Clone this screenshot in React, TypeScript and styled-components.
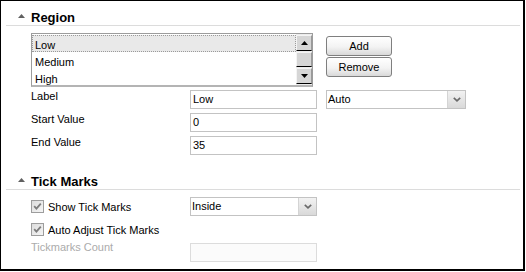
import React from 'react';
import styled, { createGlobalStyle } from 'styled-components';

const Global = createGlobalStyle`
  html, body { margin: 0; padding: 0; background: #fff; }
  body { font-family: "Liberation Sans", Arial, sans-serif; font-size: 11px; color: #000; }
`;

const Panel = styled.div`
  width: 525px;
  height: 271px;
  box-sizing: border-box;
  border-style: solid;
  border-color: #000;
  border-width: 1px 2px 2px 1px;
  padding: 0 3px 0 5px;
  background: #fff;
`;

const Section = styled.section<{ $gap?: number }>`
  margin-top: ${p => p.$gap ?? 0}px;
`;

const Header = styled.div`
  height: 24px;
  display: flex;
  align-items: flex-end;
  gap: 6px;
  padding-left: 12px;
  border-bottom: 1px solid #dcdcdc;
`;

const Caret = styled.svg`
  width: 7px;
  height: 4px;
  margin-bottom: 7px;
  flex: none;
`;

const Title = styled.div`
  font-size: 13px;
  font-weight: bold;
  line-height: 15px;
`;

const Body = styled.div`
  padding: 7px 0 0 25px;
`;

const ListRow = styled.div`
  display: flex;
  gap: 13px;
`;

const ListBox = styled.div`
  width: 282px;
  height: 54px;
  box-sizing: border-box;
  border: 1px solid #9c9c9c;
  border-bottom: 2px solid #b4b4b4;
  display: flex;
  overflow: hidden;
`;

const Items = styled.div`
  flex: 1;
  overflow: hidden;
  padding-top: 1px;
`;

const Item = styled.div<{ $selected?: boolean }>`
  height: 17px;
  line-height: 14px;
  box-sizing: border-box;
  padding: 2px 0 0 2px;
  background: ${p => (p.$selected ? '#e9e9e9' : 'transparent')};
  border: 1px dotted ${p => (p.$selected ? '#9a9a9a' : 'transparent')};
`;

const ScrollBar = styled.div`
  width: 16px;
  display: flex;
  flex-direction: column;
  padding: 1px 0;
  gap: 1px;
  background: #ececec;
`;

const ScrollPart = styled.div`
  flex: 1;
  display: flex;
  align-items: center;
  justify-content: center;
  background: #d6d6d6;
  border-top: 1px solid #f4f4f4;
  border-left: 1px solid #f4f4f4;
  border-right: 1px solid #9a9a9a;
  border-bottom: 1px solid #000;
`;

const ButtonCol = styled.div`
  display: flex;
  flex-direction: column;
  gap: 1px;
  padding-top: 3px;
`;

const Button = styled.button`
  width: 66px;
  height: 20px;
  box-sizing: border-box;
  border: 1px solid #7f7f7f;
  border-radius: 3px;
  background: linear-gradient(#ffffff, #f3f3f3 55%, #d9d9d9);
  font: 11px "Liberation Sans", Arial, sans-serif;
  color: #000;
  padding: 0;
`;

const FormGrid = styled.div<{ $top?: number }>`
  display: grid;
  grid-template-columns: 150px 127px 140px;
  grid-auto-rows: 19px;
  column-gap: 9px;
  row-gap: 4px;
  margin-top: ${p => p.$top ?? 0}px;
`;

const Label = styled.div<{ $muted?: boolean }>`
  line-height: ${p => (p.$muted ? 9 : 13)}px;
  color: ${p => (p.$muted ? '#ababab' : '#000')};
`;

const Input = styled.div<{ $disabled?: boolean }>`
  height: 19px;
  box-sizing: border-box;
  border: 1px solid ${p => (p.$disabled ? '#dcdcdc' : '#c3c3c3')};
  background: ${p => (p.$disabled ? '#fbfbfb' : '#fff')};
  padding: 0 2px;
  line-height: 17px;
`;

const Select = styled.div`
  height: 19px;
  box-sizing: border-box;
  border: 1px solid #c3c3c3;
  display: flex;
`;

const SelectText = styled.div`
  flex: 1;
  padding-left: 1px;
  line-height: 17px;
`;

const DropButton = styled.div`
  width: 17px;
  display: flex;
  align-items: center;
  justify-content: center;
  background: linear-gradient(#f2f2f2, #d9d9d9);
  border-left: 1px solid #d4d4d4;
`;

const CheckRow = styled.label`
  display: flex;
  align-items: center;
  gap: 4px;
`;

const Box = styled.svg`
  width: 13px;
  height: 13px;
  flex: none;
`;

const Up = () => (
  <Caret viewBox="0 0 7 4"><polygon points="0,4 3.5,0 7,4" fill="#606060" /></Caret>
);

const Arrow = ({ down }: { down?: boolean }) => (
  <svg width="7" height="4" viewBox="0 0 7 4">
    <polygon points={down ? '0,0 7,0 3.5,4' : '0,4 3.5,0 7,4'} fill="#000" />
  </svg>
);

const Chevron = () => (
  <svg width="8" height="5" viewBox="0 0 8 5">
    <polyline points="0.8,0.8 4,3.8 7.2,0.8" fill="none" stroke="#6a6a6a" strokeWidth="1.7" />
  </svg>
);

const Check = () => (
  <Box viewBox="0 0 13 13">
    <defs>
      <linearGradient id="cb" x1="0" y1="0" x2="1" y2="1">
        <stop offset="0" stopColor="#dcdcdc" />
        <stop offset="1" stopColor="#f6f6f6" />
      </linearGradient>
    </defs>
    <rect x="0.5" y="0.5" width="12" height="12" fill="url(#cb)" stroke="#9d9d9d" />
    <polyline points="3.2,6.2 5.4,8.6 9.8,3.6" fill="none" stroke="#7d7d7d" strokeWidth="1.8" />
  </Box>
);

export default function App() {
  return (
    <>
      <Global />
      <Panel>
        <Section>
          <Header><Up /><Title>Region</Title></Header>
          <Body>
            <ListRow>
              <ListBox>
                <Items>
                  <Item $selected>Low</Item>
                  <Item>Medium</Item>
                  <Item>High</Item>
                </Items>
                <ScrollBar>
                  <ScrollPart><Arrow /></ScrollPart>
                  <ScrollPart />
                  <ScrollPart><Arrow down /></ScrollPart>
                </ScrollBar>
              </ListBox>
              <ButtonCol>
                <Button>Add</Button>
                <Button>Remove</Button>
              </ButtonCol>
            </ListRow>
            <FormGrid $top={3}>
              <Label>Label</Label>
              <Input>Low</Input>
              <Select><SelectText>Auto</SelectText><DropButton><Chevron /></DropButton></Select>
              <Label>Start Value</Label>
              <Input>0</Input>
              <span />
              <Label>End Value</Label>
              <Input>35</Input>
            </FormGrid>
          </Body>
        </Section>
        <Section $gap={10}>
          <Header><Up /><Title>Tick Marks</Title></Header>
          <Body>
            <FormGrid>
              <CheckRow><Check />Show Tick Marks</CheckRow>
              <Select><SelectText>Inside</SelectText><DropButton><Chevron /></DropButton></Select>
              <span />
              <CheckRow><Check />Auto Adjust Tick Marks</CheckRow>
              <span />
              <span />
              <Label $muted>Tickmarks Count</Label>
              <Input $disabled />
            </FormGrid>
          </Body>
        </Section>
      </Panel>
    </>
  );
}
